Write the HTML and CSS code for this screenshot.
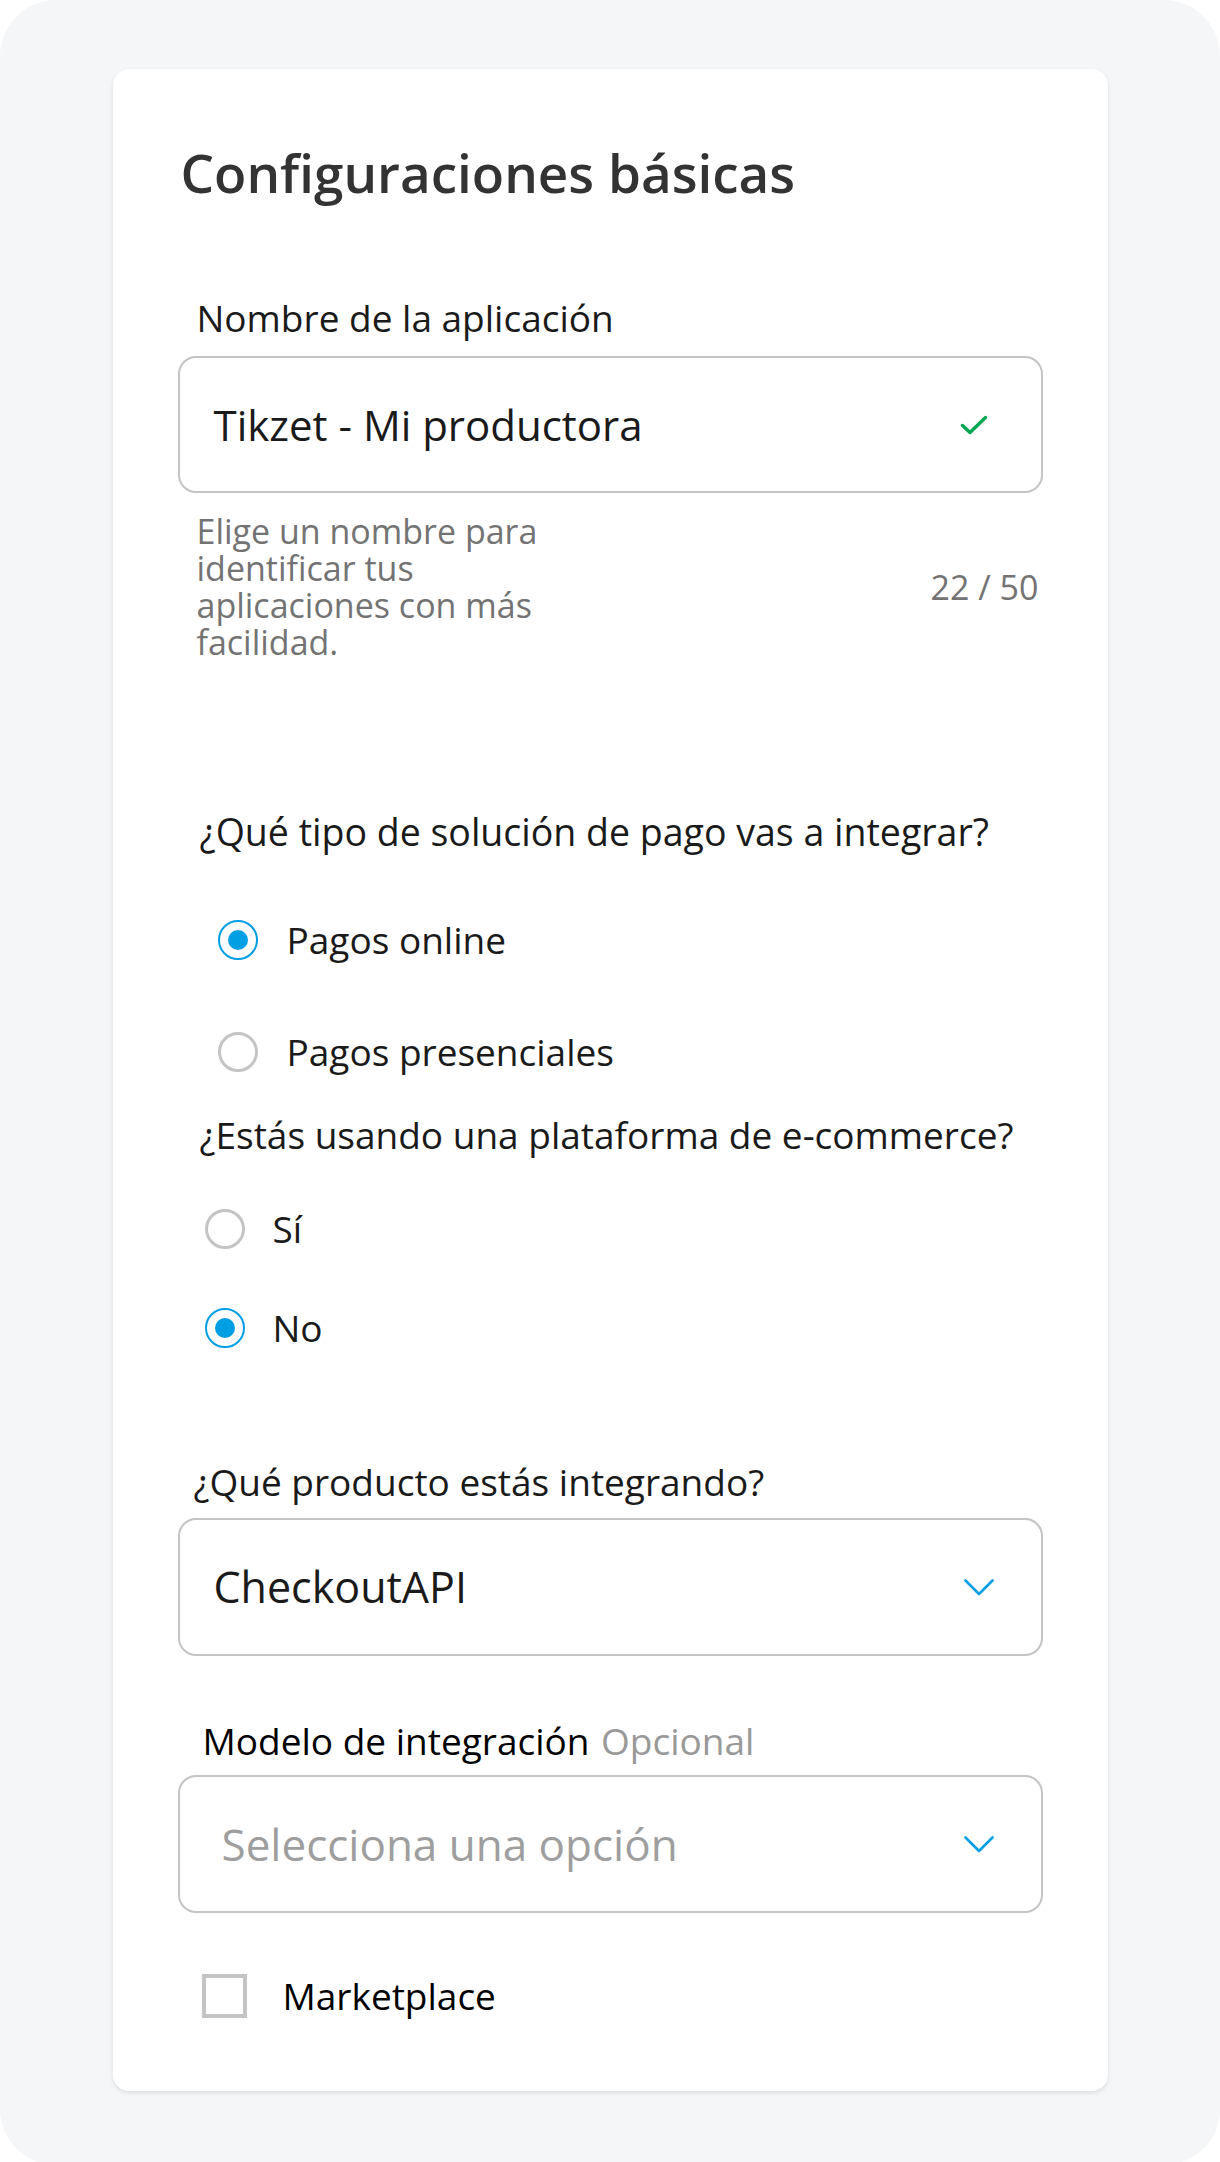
FILE: index.html
```html
<!DOCTYPE html>
<html lang="es">
<head>
<meta charset="utf-8">
<title>Configuraciones básicas</title>
<link rel="stylesheet" href="styles.css">
</head>
<body>
<div class="frame">
  <section class="card">
    <h1 class="title">Configuraciones básicas</h1>

    <label class="label label-name">Nombre de la aplicación</label>
    <div class="field">
      <span class="field-value">Tikzet - Mi productora</span>
      <svg class="icon-check" width="28" height="20" viewBox="0 0 28 20"><path d="M2.5 10.5 L10 17.5 L25.5 2.5" fill="none" stroke="#00a650" stroke-width="3.4" stroke-linecap="round" stroke-linejoin="round"/></svg>
    </div>
    <div class="helper-row">
      <p class="helper">Elige un nombre para identificar tus aplicaciones con más facilidad.</p>
      <span class="counter">22 / 50</span>
    </div>

    <p class="question q-solution">¿Qué tipo de solución de pago vas a integrar?</p>
    <div class="radio-group group-solution">
      <div class="radio-row"><span class="radio checked"></span><span class="radio-label">Pagos online</span></div>
      <div class="radio-row"><span class="radio"></span><span class="radio-label">Pagos presenciales</span></div>
    </div>

    <p class="question q-ecommerce">¿Estás usando una plataforma de e-commerce?</p>
    <div class="radio-group group-ecommerce">
      <div class="radio-row"><span class="radio"></span><span class="radio-label">Sí</span></div>
      <div class="radio-row"><span class="radio checked"></span><span class="radio-label">No</span></div>
    </div>

    <p class="question q-product">¿Qué producto estás integrando?</p>
    <div class="field select">
      <span class="field-value">CheckoutAPI</span>
      <svg class="icon-chevron" width="30" height="17" viewBox="0 0 30 17"><path d="M1.5 1.5 L15 15 L28.5 1.5" fill="none" stroke="#009ee3" stroke-width="2.6" stroke-linecap="round" stroke-linejoin="round"/></svg>
    </div>

    <p class="label label-model">Modelo de integración <span class="optional">Opcional</span></p>
    <div class="field select">
      <span class="field-value placeholder">Selecciona una opción</span>
      <svg class="icon-chevron" width="30" height="17" viewBox="0 0 30 17"><path d="M1.5 1.5 L15 15 L28.5 1.5" fill="none" stroke="#009ee3" stroke-width="2.6" stroke-linecap="round" stroke-linejoin="round"/></svg>
    </div>

    <div class="checkbox-row">
      <span class="checkbox"></span>
      <span class="checkbox-label">Marketplace</span>
    </div>
  </section>
</div>
</body>
</html>
```

FILE: styles.css
```css
* { box-sizing: border-box; }

html, body {
  margin: 0;
  padding: 0;
  background: #ffffff;
}

body {
  font-family: "Open Sans", "Noto Sans", "Liberation Sans", sans-serif;
  color: #1a1a1a;
}

.frame {
  width: 1220px;
  min-height: 2162px;
  background: #f5f6f8;
  border-radius: 56px;
  padding-top: 69px;
  padding-bottom: 74px;
}

.card {
  width: 995px;
  margin: 0 auto;
  background: #ffffff;
  border-radius: 16px;
  box-shadow: 0 2px 4px rgba(0, 0, 0, 0.10);
  padding: 75px 65px 65px 65px;
  display: flex;
  flex-direction: column;
}

.title {
  margin: 0 0 0 3px;
  font-size: 53px;
  line-height: 58px;
  font-weight: 600;
  color: #333333;
}

.label,
.question {
  margin: 0;
  font-size: 37px;
  line-height: 42px;
  font-weight: 400;
  color: #1a1a1a;
}

.q-solution { font-size: 37.5px; }

.label-name { margin: 95px 0 17px 19px; }
.q-solution { margin: 150px 0 0 22px; }
.q-ecommerce { margin: 32px 0 0 22px; }
.q-product { margin: 103px 0 15px 16px; }
.label-model { margin: 64px 0 13px 25px; color: #000000; }

.optional {
  color: #999999;
  margin-left: 2px;
}

.field {
  height: 137px;
  border: 2px solid #c4c4c4;
  border-radius: 18px;
  display: flex;
  align-items: center;
  justify-content: space-between;
  padding: 0 53px 0 34px;
  background: #ffffff;
}

.field.select { padding-right: 47px; height: 138px; }

.field-value {
  font-size: 42px;
  line-height: 50px;
  color: #1a1a1a;
}

.select .field-value { font-size: 43px; }

.select .field-value.placeholder {
  color: #9e9e9e;
  margin-left: 8px;
  font-size: 44px;
}

.helper-row {
  display: flex;
  align-items: center;
  justify-content: space-between;
  margin-top: 20px;
  padding: 0 4px 0 19px;
}

.helper {
  margin: 0;
  width: 360px;
  font-size: 34px;
  line-height: 37px;
  color: #737373;
}

.counter {
  font-size: 34px;
  line-height: 37px;
  color: #737373;
}

.radio-group {
  display: flex;
  flex-direction: column;
}

.group-solution { margin-top: 57px; padding-left: 40px; gap: 52px; }
.group-ecommerce { margin-top: 43px; padding-left: 27px; gap: 39px; }

.radio-row {
  height: 60px;
  display: flex;
  align-items: center;
  gap: 29px;
}

.group-ecommerce .radio-row { gap: 28px; }

.radio {
  width: 40px;
  height: 40px;
  border-radius: 50%;
  border: 3px solid #c4c4c4;
  display: flex;
  align-items: center;
  justify-content: center;
  flex-shrink: 0;
}

.radio.checked {
  border: 2.5px solid #009ee3;
}

.radio.checked::after {
  content: "";
  width: 20px;
  height: 20px;
  border-radius: 50%;
  background: #009ee3;
}

.radio-label,
.checkbox-label {
  font-size: 37px;
  line-height: 42px;
  color: #1a1a1a;
}

.checkbox-row {
  height: 60px;
  margin-top: 53px;
  padding-left: 24px;
  display: flex;
  align-items: center;
  gap: 36px;
}

.checkbox {
  width: 45px;
  height: 44px;
  border: 4px solid #c4c4c4;
  background: #ffffff;
  flex-shrink: 0;
}

.checkbox-label { color: #000000; }
```
